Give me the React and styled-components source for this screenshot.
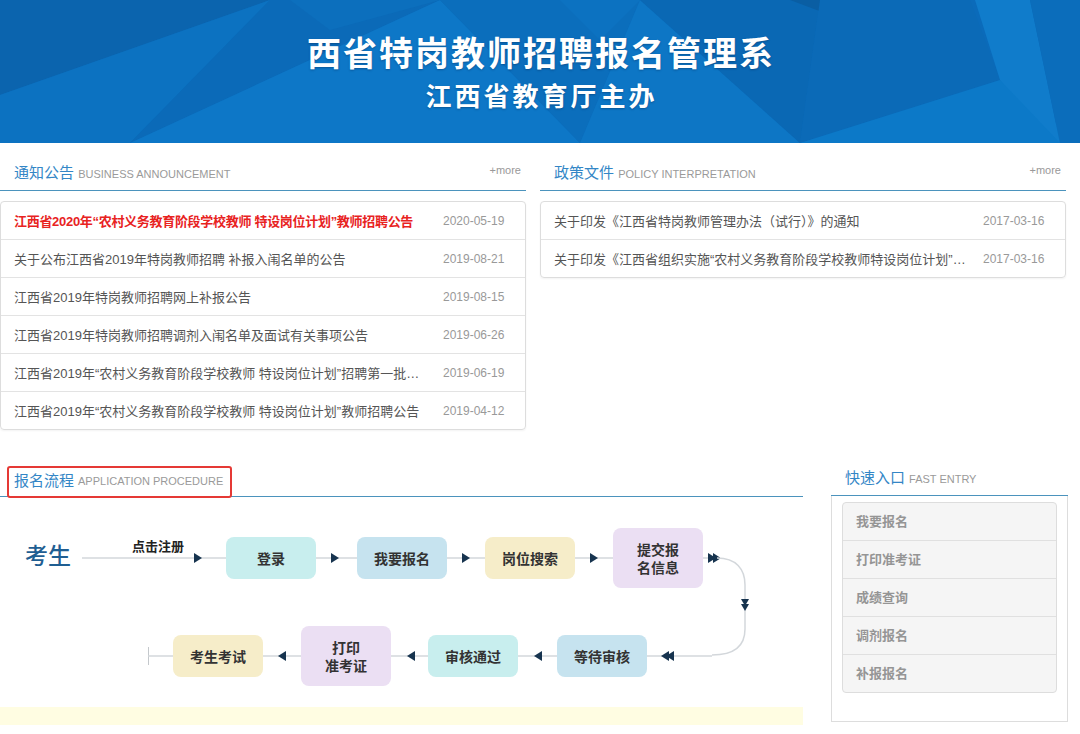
import React from 'react';
import styled, { createGlobalStyle } from 'styled-components';

const GlobalStyle = createGlobalStyle`
  body {
    margin: 0;
    background: #fff;
    font-family: "Liberation Sans", "Noto Sans CJK SC", sans-serif;
  }
`;

const Page = styled.div`
  width: 1080px;
`;

// ---------- banner ----------
const Banner = styled.header`
  position: relative;
  height: 143px;
  overflow: hidden;
  background: #0b6bba;
  display: flex;
  flex-direction: column;
  align-items: center;
`;

const BannerArt = styled.svg`
  position: absolute;
  left: 0;
  top: 0;
`;

const BannerTitle = styled.h1`
  position: relative;
  margin: 33px 0 0;
  padding-left: 2px;
  font: 700 34px/38px "Noto Sans CJK SC", sans-serif;
  letter-spacing: 2px;
  color: #fff;
  text-shadow: 0 1px 2px rgba(0, 30, 70, 0.35);
`;

const BannerSub = styled.h2`
  position: relative;
  margin: 9px 0 0;
  padding-left: 3px;
  font: 700 26px/30px "Noto Sans CJK SC", sans-serif;
  letter-spacing: 3px;
  color: #fff;
  text-shadow: 0 1px 2px rgba(0, 30, 70, 0.35);
`;

// ---------- headings ----------
const HeadTitle = styled.span`
  font-size: 15px;
  line-height: 20px;
  color: #3386c6;
  white-space: nowrap;
`;

const HeadEn = styled.span`
  font-size: 11px;
  line-height: ${(p) => p.$lh || 'inherit'};
  color: #9a9a9a;
  text-transform: uppercase;
`;

const More = styled.a`
  font-size: 11px;
  line-height: 14px;
  color: #999;
  text-decoration: none;
`;

// ---------- news panels ----------
const NewsRow = styled.section`
  display: grid;
  grid-template-columns: 526px 526px;
  column-gap: 14px;
`;

const PanelHead = styled.div`
  height: 48px;
  box-sizing: border-box;
  padding: 20px 5px 0 14px;
  border-bottom: 1px solid #4b93bd;
  display: flex;
  align-items: flex-start;
  justify-content: space-between;
`;

const List = styled.ul`
  margin: 10px 0 0;
  padding: 0;
  list-style: none;
  border: 1px solid #ddd;
  border-radius: 4px;
  box-shadow: 0 1px 2px rgba(0, 0, 0, 0.05);
`;

const Item = styled.li`
  height: 37px;
  display: flex;
  align-items: center;
  padding: 0 20px 0 13px;
  border-top: 1px solid #e3e3e3;
  &:first-child {
    border-top: 0;
  }
`;

const ItemTitle = styled.a`
  flex: 1;
  min-width: 0;
  margin-right: 14px;
  font-size: 13px;
  color: ${(p) => (p.$hot ? '#e8231f' : '#555')};
  font-weight: ${(p) => (p.$hot ? 700 : 400)};
  letter-spacing: ${(p) => (p.$hot ? '-0.3px' : '0')};
  text-decoration: none;
  white-space: nowrap;
  overflow: hidden;
  text-overflow: ellipsis;
`;

const ItemDate = styled.span`
  flex: none;
  width: 62px;
  font-size: 12px;
  color: #999;
  white-space: nowrap;
`;

// ---------- lower area ----------
const Lower = styled.section`
  display: grid;
  grid-template-columns: 803px 237px;
  column-gap: 28px;
  margin-top: 35px;
`;

const FlowHead = styled.div`
  height: 31px;
  border-bottom: 1px solid #4b93bd;
  display: flex;
  align-items: flex-end;
`;

const Marked = styled.div`
  margin: 0 0 -2px 7px;
  height: 32px;
  box-sizing: border-box;
  border: 2px solid #e53935;
  border-radius: 3px;
  padding: 0 7px 3px 5px;
  display: flex;
  align-items: center;
  gap: 4px;
`;

const Flow = styled.div`
  position: relative;
  height: 208px;
  box-sizing: border-box;
  padding-top: 31px;
`;

const FlowRow = styled.div`
  display: flex;
  align-items: center;
  height: 60px;
  margin-top: ${(p) => p.$gap || 0}px;
  padding-left: ${(p) => p.$indent || 0}px;
`;

const Start = styled.div`
  flex: none;
  margin-left: 25px;
  padding-bottom: 8px;
  font: 500 23px/30px "Noto Sans CJK SC", sans-serif;
  color: #1f5e92;
`;

const LinkWrap = styled.div`
  position: relative;
  flex: none;
  margin-left: ${(p) => p.$offset || 0}px;
`;

const LinkLabel = styled.span`
  position: absolute;
  left: 50px;
  bottom: 11px;
  font: 700 13px/16px "Noto Sans CJK SC", sans-serif;
  color: #222;
  white-space: nowrap;
`;

const LinkSvg = styled.svg`
  display: block;
  flex: none;
`;

const Step = styled.div`
  flex: none;
  width: 90px;
  height: ${(p) => (p.$tall ? 60 : 42)}px;
  border-radius: 8px;
  background: ${(p) => p.$tone};
  display: flex;
  align-items: center;
  justify-content: center;
  text-align: center;
  font: 700 14px/18px "Noto Sans CJK SC", sans-serif;
  color: #333;
`;

const Curve = styled.svg`
  position: absolute;
  left: 700px;
  top: 40px;
`;

const YellowBar = styled.div`
  height: 18px;
  margin-top: 2px;
  background: #fffde2;
`;

const QuickHead = styled.div`
  height: 31px;
  box-sizing: border-box;
  padding: 3px 0 0 14px;
  border-bottom: 1px solid #4b93bd;
  display: flex;
  gap: 4px;
  align-items: flex-start;
`;

const QuickBox = styled.div`
  height: 226px;
  box-sizing: border-box;
  border: 1px solid #ddd;
  border-top: 0;
  padding: 6px 10px;
`;

const QuickList = styled.ul`
  margin: 0;
  padding: 0;
  list-style: none;
  background: #f5f5f5;
  border: 1px solid #ddd;
  border-radius: 4px;
`;

const QuickItem = styled.li`
  height: 35px;
  display: flex;
  align-items: center;
  padding: 0 0 2px 13px;
  border-top: 1px solid #e0e0e0;
  font: 700 13px/16px "Noto Sans CJK SC", sans-serif;
  color: #959595;
  &:first-child {
    border-top: 0;
  }
`;

// ---------- drawings ----------
const tri = (cx, dir) => {
  if (dir === 'right') return `${cx - 4},2 ${cx + 4},7 ${cx - 4},12`;
  return `${cx + 4},2 ${cx - 4},7 ${cx + 4},12`;
};

const Link = ({ width, at, dir = 'right', double }) => (
  <LinkSvg width={width} height={14} viewBox={`0 0 ${width} 14`}>
    <line x1="0" y1="7" x2={width} y2="7" stroke="#d3d7db" strokeWidth="1.5" />
    <polygon points={tri(at, dir)} fill="#17344f" />
    {double && <polygon points={tri(dir === 'right' ? at + 5 : at - 5, dir)} fill="#17344f" />}
  </LinkSvg>
);

const Tail = () => (
  <LinkSvg width={25} height={18} viewBox="0 0 25 18">
    <line x1="0.5" y1="0" x2="0.5" y2="18" stroke="#c4c8cc" strokeWidth="1" />
    <line x1="0" y1="9" x2="25" y2="9" stroke="#d3d7db" strokeWidth="1.5" />
  </LinkSvg>
);

const BannerBg = () => (
  <BannerArt width="1080" height="143" viewBox="0 0 1080 143">
    <rect width="1080" height="143" fill="#0b6bba" />
    <polygon points="0,0 270,0 0,95" fill="#0b64ae" />
    <polygon points="0,95 270,0 130,143 0,143" fill="#0c72c1" />
    <polygon points="270,0 440,0 130,143" fill="#0b6ab8" />
    <polygon points="130,143 440,0 580,143" fill="#0d77c7" />
    <polygon points="290,0 440,0 330,30" fill="#0c6fbd" />
    <polygon points="440,0 640,0 580,143" fill="#0b6ebc" />
    <polygon points="580,143 640,0 800,143" fill="#0d76c5" />
    <polygon points="640,0 820,0 800,143" fill="#0a68b4" />
    <polygon points="790,0 960,0 870,30" fill="#0a5ea3" />
    <polygon points="820,0 970,0 1000,80 800,143" fill="#0b6ab7" />
    <polygon points="800,143 1000,80 1080,143" fill="#0c79c8" />
    <polygon points="975,0 1030,0 1060,143 1000,80" fill="#107ccb" />
    <polygon points="1030,0 1080,0 1080,143 1060,143" fill="#0b6dbb" />
    <polygon points="560,0 640,0 600,40" fill="#0c72c1" />
  </BannerArt>
);

const notices = [
  { t: '江西省2020年“农村义务教育阶段学校教师 特设岗位计划”教师招聘公告', d: '2020-05-19', hot: true },
  { t: '关于公布江西省2019年特岗教师招聘 补报入闱名单的公告', d: '2019-08-21' },
  { t: '江西省2019年特岗教师招聘网上补报公告', d: '2019-08-15' },
  { t: '江西省2019年特岗教师招聘调剂入闱名单及面试有关事项公告', d: '2019-06-26' },
  { t: '江西省2019年“农村义务教育阶段学校教师 特设岗位计划”招聘第一批拟聘人员名单公示', d: '2019-06-19' },
  { t: '江西省2019年“农村义务教育阶段学校教师 特设岗位计划”教师招聘公告', d: '2019-04-12' },
];

const policies = [
  { t: '关于印发《江西省特岗教师管理办法（试行）》的通知', d: '2017-03-16' },
  { t: '关于印发《江西省组织实施“农村义务教育阶段学校教师特设岗位计划”实施方案》的通知', d: '2017-03-16' },
];

const quick = ['我要报名', '打印准考证', '成绩查询', '调剂报名', '补报报名'];

const CYAN = '#c8eeee';
const BLUE = '#c6e3ef';
const SAND = '#f6edc9';
const LILAC = '#ebdff3';

const NewsPanel = ({ title, en, items }) => (
  <div>
    <PanelHead>
      <HeadTitle>
        {title} <HeadEn>{en}</HeadEn>
      </HeadTitle>
      <More href="#">+more</More>
    </PanelHead>
    <List>
      {items.map((n) => (
        <Item key={n.t}>
          <ItemTitle href="#" $hot={n.hot}>{n.t}</ItemTitle>
          <ItemDate>{n.d}</ItemDate>
        </Item>
      ))}
    </List>
  </div>
);

export default function App() {
  return (
    <Page>
      <GlobalStyle />
      <Banner>
        <BannerBg />
        <BannerTitle>西省特岗教师招聘报名管理系</BannerTitle>
        <BannerSub>江西省教育厅主办</BannerSub>
      </Banner>

      <NewsRow>
        <NewsPanel title="通知公告" en="Business announcement" items={notices} />
        <NewsPanel title="政策文件" en="Policy interpretation" items={policies} />
      </NewsRow>

      <Lower>
        <div>
          <FlowHead>
            <Marked>
              <HeadTitle>报名流程</HeadTitle>
              <HeadEn>Application procedure</HeadEn>
            </Marked>
          </FlowHead>
          <Flow>
            <FlowRow>
              <Start>考生</Start>
              <LinkWrap $offset={11}>
                <LinkLabel>点击注册</LinkLabel>
                <Link width={144} at={116} />
              </LinkWrap>
              <Step $tone={CYAN}>登录</Step>
              <Link width={41} at={19} />
              <Step $tone={BLUE}>我要报名</Step>
              <Link width={38} at={19} />
              <Step $tone={SAND}>岗位搜索</Step>
              <Link width={38} at={19} />
              <Step $tone={LILAC} $tall>提交报<br />名信息</Step>
              <Link width={17} at={9} double />
            </FlowRow>
            <FlowRow $gap={38} $indent={148}>
              <Tail />
              <Step $tone={SAND}>考生考试</Step>
              <Link width={38} at={19} dir="left" />
              <Step $tone={LILAC} $tall>打印<br />准考证</Step>
              <Link width={37} at={20} dir="left" />
              <Step $tone={CYAN}>审核通过</Step>
              <Link width={39} at={20} dir="left" />
              <Step $tone={BLUE}>等待审核</Step>
              <Link width={65} at={23} dir="left" double />
            </FlowRow>
            <Curve width="60" height="130" viewBox="0 0 60 130">
              <path
                d="M17 21 C 36 21, 45 32, 45 48 L 45 92 C 45 108, 36 118, 12 118"
                fill="none"
                stroke="#d3d7db"
                strokeWidth="1.5"
              />
              <polygon points="41,62 49,62 45,69" fill="#17344f" />
              <polygon points="41,67 49,67 45,74" fill="#17344f" />
            </Curve>
          </Flow>
          <YellowBar />
        </div>

        <div>
          <QuickHead>
            <HeadTitle>快速入口</HeadTitle>
            <HeadEn $lh="22px">Fast entry</HeadEn>
          </QuickHead>
          <QuickBox>
            <QuickList>
              {quick.map((q) => (
                <QuickItem key={q}>{q}</QuickItem>
              ))}
            </QuickList>
          </QuickBox>
        </div>
      </Lower>
    </Page>
  );
}
